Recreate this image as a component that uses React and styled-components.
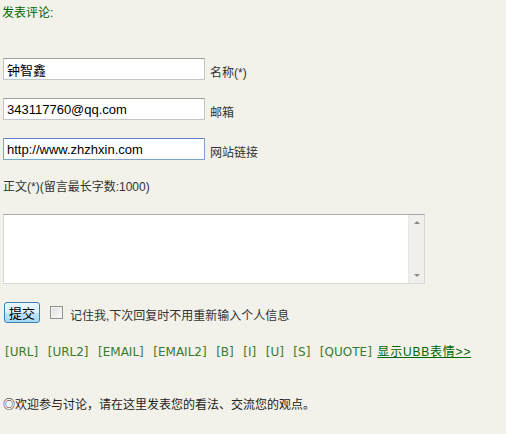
import styled, { createGlobalStyle } from "styled-components";

const GlobalStyle = createGlobalStyle`
  html, body {
    margin: 0;
    padding: 0;
    background: #f2f1ea;
  }
  body {
    font-family: "Liberation Sans", "Noto Sans CJK SC", sans-serif;
    font-size: 12px;
    color: #333;
  }
`;

const Page = styled.div`
  width: 506px;
  height: 434px;
  padding: 5px 0 0 3px;
  box-sizing: border-box;
  display: flex;
  flex-direction: column;
`;

const Title = styled.div`
  color: #006600;
  line-height: 16px;
  margin-left: -1px;
`;

const FieldRow = styled.div`
  display: flex;
  align-items: flex-start;
  margin-top: ${(p) => p.$top}px;
`;

const TextInput = styled.input`
  width: 202px;
  height: 22px;
  box-sizing: border-box;
  padding: 0 3px;
  border: 1px solid ${(p) => (p.$focus ? "#7da2ce" : "#c5c5c5")};
  border-top-color: ${(p) => (p.$focus ? "#5b86c0" : "#a0a0a0")};
  background: #fff;
  font-family: "Liberation Sans", "Noto Sans CJK SC", sans-serif;
  font-size: 13px;
  color: #000;
  outline: none;
`;

const FieldLabel = styled.span`
  margin: 8px 0 0 5px;
  line-height: 14px;
  color: #333;
`;

const Note = styled.div`
  margin-top: 19px;
  line-height: 16px;
`;

const TextBox = styled.div`
  margin-top: 19px;
  width: 422px;
  height: 70px;
  box-sizing: border-box;
  display: flex;
  border: 1px solid #d8d8d4;
  border-top-color: #a8a8a8;
  background: #fff;
`;

const Area = styled.textarea`
  flex: 1;
  border: none;
  resize: none;
  outline: none;
  background: transparent;
  overflow: hidden;
`;

const ScrollTrack = styled.div`
  width: 16px;
  background: #efefec;
  border-left: 1px solid #e6e6e2;
  display: flex;
  flex-direction: column;
  justify-content: space-between;
  align-items: center;
  padding: 6px 0;
  box-sizing: border-box;
`;

const Arrow = styled.span`
  width: 0;
  height: 0;
  border-left: 3px solid transparent;
  border-right: 3px solid transparent;
  ${(p) =>
    p.$up
      ? "border-bottom: 3px solid #8a8a8a;"
      : "border-top: 3px solid #8a8a8a;"}
`;

const SubmitRow = styled.div`
  margin-top: 18px;
  display: flex;
  align-items: center;
  padding-left: 1px;
`;

const SubmitButton = styled.button`
  width: 36px;
  height: 21px;
  padding: 0;
  border: 1px solid #3c7fb1;
  border-radius: 3px;
  background: linear-gradient(#eaf6fd, #d9f0fc 50%, #bee6fd 51%, #a7d9f5);
  font-family: "Noto Sans CJK SC", sans-serif;
  font-size: 13px;
  line-height: 17px;
  color: #000;
`;

const CheckBox = styled.span`
  width: 11px;
  height: 11px;
  margin-left: 10px;
  border: 1px solid #8f8f8f;
  background: linear-gradient(135deg, #dcdcdc, #fbfbfb);
  box-shadow: inset 0 0 0 1px #f4f4f4;
`;

const CheckText = styled.span`
  margin-left: 7px;
  margin-top: 3px;
  color: #333;
`;

const UbbRow = styled.div`
  margin-top: 21px;
  padding-left: 2px;
  display: flex;
  align-items: center;
  gap: 9.5px;
  line-height: 16px;
`;

const UbbTag = styled.span`
  color: #3a7a30;
  font-family: "DejaVu Sans", sans-serif;
  font-size: 12px;
`;

const UbbLink = styled.a`
  color: #006600;
  text-decoration: underline;
  letter-spacing: 0.8px;
  margin-left: -4px;
`;

const Welcome = styled.div`
  margin-top: 37px;
  line-height: 16px;
  color: #222;
`;

const tags = ["URL", "URL2", "EMAIL", "EMAIL2", "B", "I", "U", "S", "QUOTE"];

export default function App() {
  return (
    <>
      <GlobalStyle />
      <Page>
        <Title>发表评论:</Title>
        <FieldRow $top={37}>
          <TextInput defaultValue="钟智鑫" />
          <FieldLabel>名称(*)</FieldLabel>
        </FieldRow>
        <FieldRow $top={18}>
          <TextInput defaultValue="343117760@qq.com" />
          <FieldLabel>邮箱</FieldLabel>
        </FieldRow>
        <FieldRow $top={18}>
          <TextInput $focus defaultValue="http://www.zhzhxin.com" />
          <FieldLabel>网站链接</FieldLabel>
        </FieldRow>
        <Note>正文(*)(留言最长字数:1000)</Note>
        <TextBox>
          <Area />
          <ScrollTrack>
            <Arrow $up />
            <Arrow />
          </ScrollTrack>
        </TextBox>
        <SubmitRow>
          <SubmitButton>提交</SubmitButton>
          <CheckBox />
          <CheckText>记住我,下次回复时不用重新输入个人信息</CheckText>
        </SubmitRow>
        <UbbRow>
          {tags.map((t) => (
            <UbbTag key={t}>[{t}]</UbbTag>
          ))}
          <UbbLink href="#">显示UBB表情&gt;&gt;</UbbLink>
        </UbbRow>
        <Welcome>◎欢迎参与讨论，请在这里发表您的看法、交流您的观点。</Welcome>
      </Page>
    </>
  );
}
